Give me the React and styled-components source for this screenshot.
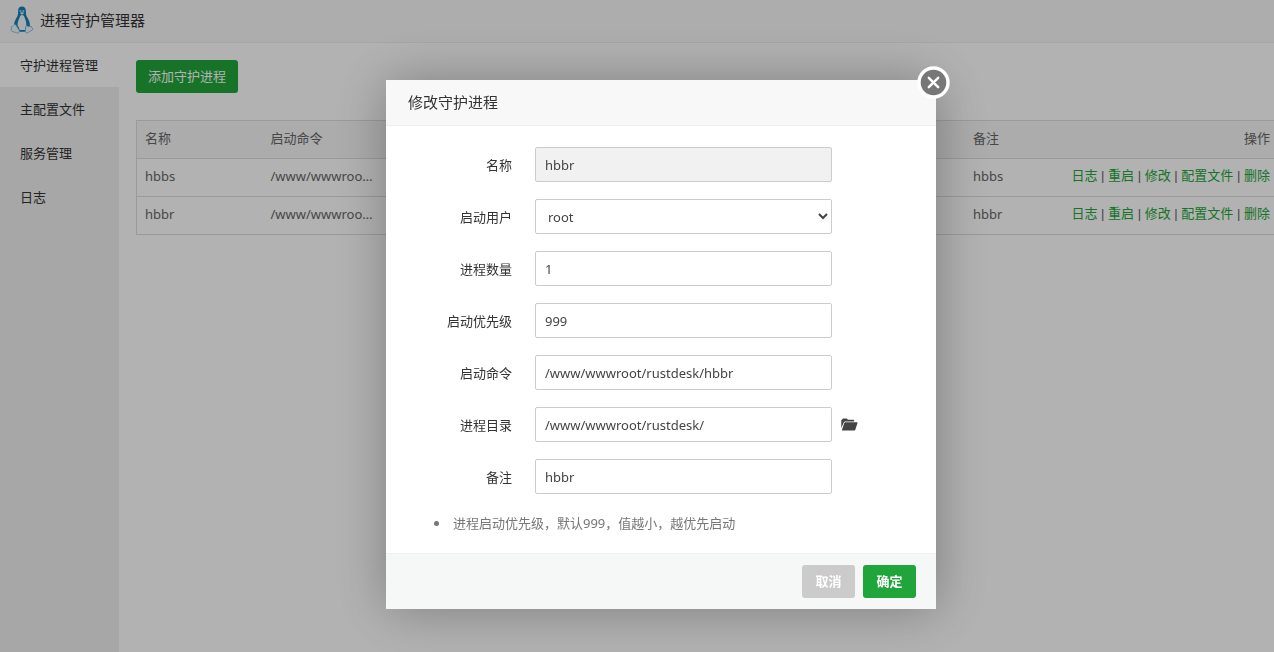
import React, { useState } from 'react';
import styled, { createGlobalStyle } from 'styled-components';

const GlobalStyle = createGlobalStyle`
    * {
        box-sizing: border-box;
    }

    body {
        margin: 0;
        background-color: #ffffff;
        color: #333333;
        font-family: "Noto Sans", "Noto Sans CJK SC", sans-serif;
        font-size: 13px;
        line-height: 20px;
    }

    button, input, select {
        font-family: inherit;
        font-size: inherit;
    }
`;

const PageWrapper = styled.div`
    display: flex;
    flex-direction: column;
    min-height: 100vh;
    overflow: hidden;
`;

const HeaderWrapper = styled.header`
    display: flex;
    align-items: center;
    gap: 6px;
    height: 43px;
    padding: 0 0 2px 10px;
    background-color: #f8f8f8;
    border-bottom: 1px solid #eeeeee;
`;

const HeaderTitle = styled.h1`
    margin: 0;
    font-size: 15px;
    font-weight: normal;
`;

const BodyWrapper = styled.div`
    display: flex;
    flex: 1;
`;

const Sidebar = styled.nav`
    flex: 0 0 119px;
    background-color: #f0f0f0;
`;

const SidebarLink = styled.a`
    display: block;
    padding-left: 20px;
    line-height: 44px;
    color: #333333;
    text-decoration: none;
    background-color: ${({ $active }) => ($active ? '#ffffff' : 'transparent')};
`;

const Main = styled.main`
    flex: 1;
    min-width: 0;
    padding: 17px 0 0 17px;
`;

const Button = styled.button`
    height: 33px;
    min-width: 53px;
    padding: 0 12px 3px;
    border: unset;
    border-radius: 3px;
    background-color: ${({ $muted }) => ($muted ? '#cbcbcb' : '#20a53a')};
    color: #ffffff;
    font-weight: ${({ $bold }) => ($bold ? 'bold' : 'normal')};
    cursor: pointer;
`;

const Table = styled.table`
    width: 100%;
    margin-top: 27px;
    table-layout: fixed;
    border-collapse: collapse;
    border: 1px solid #dddddd;
    border-right: unset;
    color: #666666;
`;

const Col = styled.col`
    width: ${({ $width }) => $width};
`;

const HeadRow = styled.tr`
    background-color: #f6f6f6;
`;

const HeadCell = styled.th`
    height: 38px;
    padding: 0 4px 3px 8px;
    border-bottom: 1px solid #dddddd;
    font-weight: normal;
    text-align: ${({ $align }) => $align || 'left'};
`;

const Cell = styled.td`
    height: 38px;
    padding: 0 4px 3px 8px;
    border-bottom: 1px solid #dddddd;
    text-align: left;
    white-space: nowrap;
    overflow: hidden;
    text-overflow: ellipsis;
`;

const ActionCell = styled(Cell)`
    font-family: "Liberation Sans", "Noto Sans CJK SC", sans-serif;
    text-align: right;
`;

const ActionLink = styled.a`
    color: #20a53a;
    text-decoration: none;
`;

const Overlay = styled.div`
    position: fixed;
    inset: 0;
    display: flex;
    justify-content: center;
    align-items: flex-start;
    padding: 80px 0 0 48px;
    background-color: rgba(0, 0, 0, 0.3);
`;

const Dialog = styled.div`
    position: relative;
    width: 550px;
    background-color: #ffffff;
    box-shadow: 1px 1px 50px rgba(0, 0, 0, 0.3);
`;

const DialogTitle = styled.h2`
    margin: 0;
    padding-left: 22px;
    background-color: #f8f8f8;
    border-bottom: 1px solid #eeeeee;
    font-size: 15px;
    font-weight: normal;
    line-height: 45px;
`;

const CloseButton = styled.button`
    position: absolute;
    top: -14px;
    right: -14px;
    display: flex;
    padding: 0;
    border: unset;
    border-radius: 50%;
    background-color: transparent;
    cursor: pointer;
`;

const Form = styled.form`
    margin: 0;
`;

const Fields = styled.div`
    display: flex;
    flex-direction: column;
    gap: 17px;
    padding-top: 21px;
`;

const Field = styled.div`
    display: flex;
    align-items: center;
`;

const Label = styled.label`
    width: 126px;
    margin-right: 23px;
    text-align: right;
`;

const Input = styled.input`
    width: 297px;
    height: 35px;
    padding: 0 9px;
    border: 1px solid #cccccc;
    border-radius: 2px;
    background-color: #ffffff;
    color: #444444;

    &:disabled {
        background-color: #f1f1f1;
    }
`;

const Select = styled.select`
    width: 297px;
    height: 35px;
    padding: 0 8px;
    border: 1px solid #cccccc;
    border-radius: 2px;
    background-color: #ffffff;
    color: #444444;
`;

const FolderButton = styled.button`
    display: flex;
    margin-left: 9px;
    padding: 0;
    border: unset;
    background-color: transparent;
    cursor: pointer;
`;

const Notes = styled.ul`
    margin: 19px 0 20px;
    padding-left: 64px;
    color: #777777;
`;

const Note = styled.li`
    padding-left: 3px;
`;

const DialogFooter = styled.div`
    display: flex;
    justify-content: flex-end;
    gap: 8px;
    padding: 11px 20px;
    background-color: #f6f8f8;
    border-top: 1px solid #edf1f2;
`;

const LinuxLogo = () => (
    <svg width="24" height="28" viewBox="0 0 24 28" aria-hidden="true">
        <path
            d="M12 0.500C9.300 0.500 8 2.300 8.100 5.200C8.200 8.700 7.500 10.300 6 12.800C4.500 15.300 3.800 18 4.200 20L7.500 25.800H16.500L19.800 20C20.200 17.500 19.200 14.800 17.800 12.300C16 9.500 15.900 8.300 15.900 5.200C15.900 2.400 14.500 0.500 12 0.500Z"
            fill="#1480b8"
        />
        <path
            d="M12 9C10.500 9 9.900 10 9.600 11.500C8.600 14 7.300 16.500 7.600 19.500C8.700 21 9.400 22.500 9.600 24H15.100C15.100 22.500 15.500 20.800 16.300 19.700C16.600 16.500 15.400 13.500 14.500 11.300C14 9.800 13.300 9 12 9Z"
            fill="#f3f8fa"
        />
        <path d="M9.800 6.900L12 5.900L14.400 6.900L12 8.800Z" fill="#d6edf7" />
        <circle cx="10.500" cy="5" r="1" fill="#b5daea" />
        <circle cx="13.400" cy="5" r="1" fill="#b5daea" />
        <path
            d="M4.500 18.500C3.700 19 3.600 20.300 1.400 20.700C0.700 21 1.800 22.800 1.200 24.500C1.100 25.700 5 26 7.200 27C9 27.200 9.900 25.800 9.200 24.200L6.500 20C5.800 18.700 5.200 18.200 4.500 18.500Z"
            fill="#eef7fa"
            stroke="#66b2d2"
            strokeWidth="0.800"
        />
        <path
            d="M16.400 19.200C15.600 21 15.300 24 15.300 25.500C15.500 27.200 17.400 27.400 18.500 26.300C20 25 23 24.200 22.900 23.300C21.900 22.400 22 21 21 20C20.300 20.800 17.800 21 16.400 19.200Z"
            fill="#eef7fa"
            stroke="#66b2d2"
            strokeWidth="0.800"
        />
    </svg>
);

const CloseIcon = () => (
    <svg width="33" height="33" viewBox="0 0 33 33" aria-hidden="true">
        <circle cx="16.500" cy="16.500" r="14.500" fill="#777777" stroke="#ffffff" strokeWidth="3.400" />
        <path d="M11.800 11.800L21.200 21.200M21.200 11.800L11.800 21.200" stroke="#ffffff" strokeWidth="2.400" strokeLinecap="round" />
    </svg>
);

const FolderIcon = () => (
    <svg width="17" height="13" viewBox="0 0 17 13" fill="#444444" aria-hidden="true">
        <path d="M0.300 10V2.300Q0.300 1.700 1 1.700L1.600 0.800Q1.900 0.500 2.300 0.500H5.400Q5.800 0.500 6.100 0.800L6.900 1.700H12.300Q13.100 1.700 13.200 2.500V3.400H4.200Q3.300 3.400 3 4.100Z" />
        <path d="M4.300 4.300H16Q16.700 4.300 16.500 5L14.300 11.700Q14.100 12.400 13.400 12.400H1.400Q0.700 12.400 1 11.700L3.300 5Q3.500 4.300 4.300 4.300Z" />
    </svg>
);

const menu = ['守护进程管理', '主配置文件', '服务管理', '日志'];
const actions = ['日志', '重启', '修改', '配置文件', '删除'];
const processes = [
    { name: 'hbbs', command: '/www/wwwroot/rustdesk/hbbs', note: 'hbbs' },
    { name: 'hbbr', command: '/www/wwwroot/rustdesk/hbbr', note: 'hbbr' },
];

const ProcessTable = () => (
    <Table>
        <colgroup>
            <Col $width="126px" />
            <Col $width="115px" />
            <Col />
            <Col $width="85px" />
            <Col $width="224px" />
        </colgroup>
        <thead>
            <HeadRow>
                <HeadCell>名称</HeadCell>
                <HeadCell>启动命令</HeadCell>
                <HeadCell />
                <HeadCell>备注</HeadCell>
                <HeadCell $align="right">操作</HeadCell>
            </HeadRow>
        </thead>
        <tbody>
            {processes.map(({ name, command, note }) => (
                <tr key={name}>
                    <Cell>{name}</Cell>
                    <Cell>{command}</Cell>
                    <Cell />
                    <Cell>{note}</Cell>
                    <ActionCell>
                        {actions.map((action, i) => (
                            <React.Fragment key={action}>
                                {i > 0 && ' | '}
                                <ActionLink href="#">{action}</ActionLink>
                            </React.Fragment>
                        ))}
                    </ActionCell>
                </tr>
            ))}
        </tbody>
    </Table>
);

const EditDialog = ({ closeHandler }) => {
    const submitHandler = (e) => {
        e.preventDefault();
        closeHandler();
    };

    return (
        <Overlay>
            <Dialog role="dialog" aria-labelledby="dialog-title">
                <DialogTitle id="dialog-title">修改守护进程</DialogTitle>
                <CloseButton type="button" onClick={closeHandler}>
                    <CloseIcon />
                </CloseButton>
                <Form onSubmit={submitHandler}>
                    <Fields>
                        <Field>
                            <Label htmlFor="name">名称</Label>
                            <Input id="name" defaultValue="hbbr" disabled />
                        </Field>
                        <Field>
                            <Label htmlFor="user">启动用户</Label>
                            <Select id="user" defaultValue="root">
                                <option>root</option>
                            </Select>
                        </Field>
                        <Field>
                            <Label htmlFor="count">进程数量</Label>
                            <Input id="count" defaultValue="1" />
                        </Field>
                        <Field>
                            <Label htmlFor="priority">启动优先级</Label>
                            <Input id="priority" defaultValue="999" />
                        </Field>
                        <Field>
                            <Label htmlFor="command">启动命令</Label>
                            <Input id="command" defaultValue="/www/wwwroot/rustdesk/hbbr" />
                        </Field>
                        <Field>
                            <Label htmlFor="path">进程目录</Label>
                            <Input id="path" defaultValue="/www/wwwroot/rustdesk/" />
                            <FolderButton type="button">
                                <FolderIcon />
                            </FolderButton>
                        </Field>
                        <Field>
                            <Label htmlFor="note">备注</Label>
                            <Input id="note" defaultValue="hbbr" />
                        </Field>
                    </Fields>
                    <Notes>
                        <Note>进程启动优先级，默认999，值越小，越优先启动</Note>
                    </Notes>
                    <DialogFooter>
                        <Button type="button" $bold $muted onClick={closeHandler}>取消</Button>
                        <Button type="submit" $bold>确定</Button>
                    </DialogFooter>
                </Form>
            </Dialog>
        </Overlay>
    );
};

const App = () => {
    const [open, setOpen] = useState(true);

    return (
        <PageWrapper lang="zh-CN">
            <GlobalStyle />
            <HeaderWrapper>
                <LinuxLogo />
                <HeaderTitle>进程守护管理器</HeaderTitle>
            </HeaderWrapper>
            <BodyWrapper>
                <Sidebar>
                    {menu.map((item, i) => (
                        <SidebarLink key={item} href="#" $active={i === 0}>{item}</SidebarLink>
                    ))}
                </Sidebar>
                <Main>
                    <Button type="button" onClick={() => setOpen(true)}>添加守护进程</Button>
                    <ProcessTable />
                </Main>
            </BodyWrapper>
            {open && <EditDialog closeHandler={() => setOpen(false)} />}
        </PageWrapper>
    );
};

export default App;
